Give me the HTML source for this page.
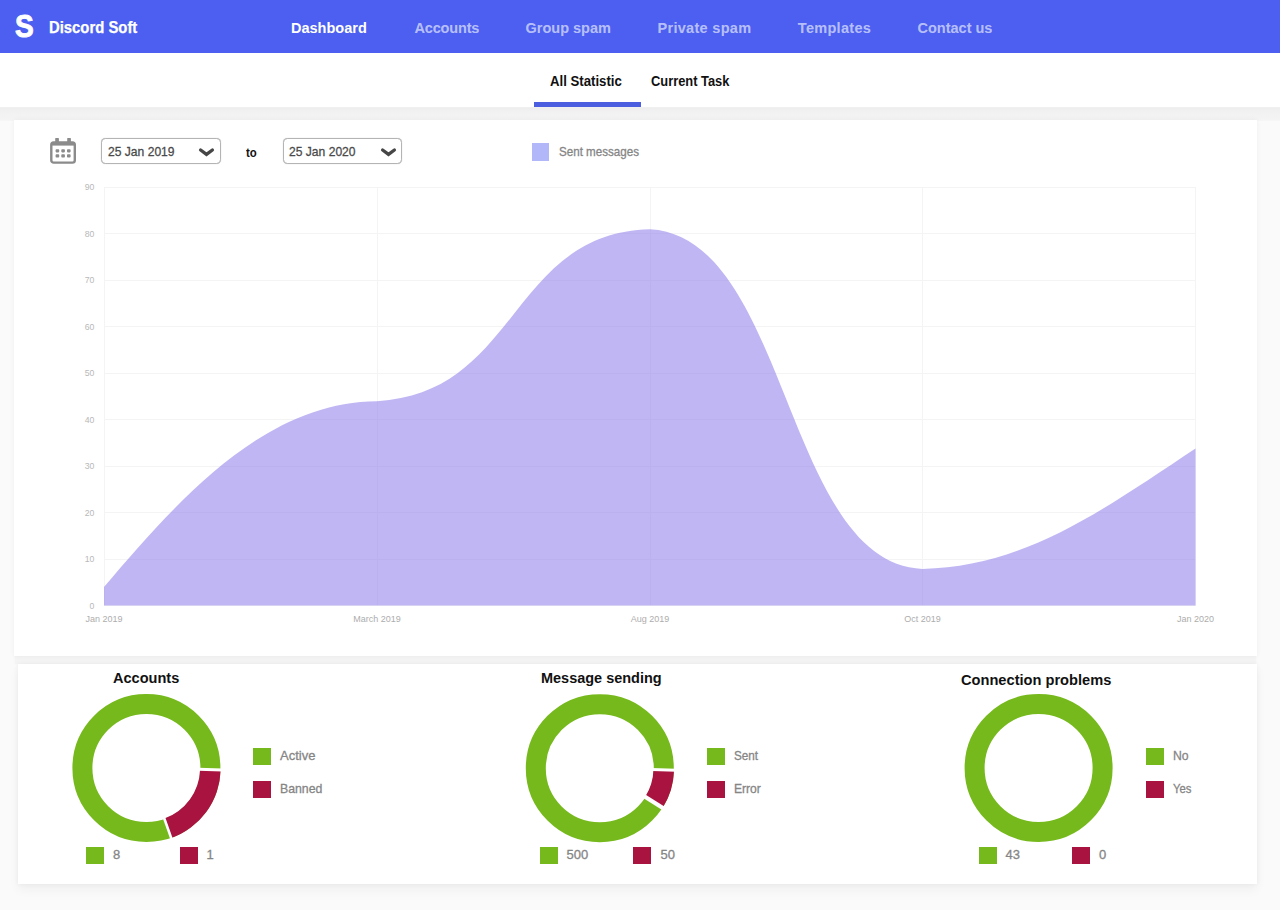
<!DOCTYPE html>
<html>
<head>
<meta charset="utf-8">
<title>Discord Soft</title>
<style>
*{box-sizing:border-box;margin:0;padding:0}
html,body{width:1280px;height:910px;overflow:hidden}
body{background:#fafafa;font-family:"Liberation Sans",sans-serif;position:relative}
.abs{position:absolute;white-space:nowrap;line-height:1;transform-origin:0 50%}
#hdr{position:absolute;left:0;top:0;width:1280px;height:53px;background:#4c5ff1}
#sub{position:absolute;left:0;top:53px;width:1280px;height:54px;background:#fff}
#band1{position:absolute;left:0;top:106px;width:1280px;height:15px;background:linear-gradient(#fff 0,#ededed 12%,#f1f1f1 35%,#f4f4f4 90%,#f6f6f6 100%)}
#band2{position:absolute;left:15px;top:656px;width:1241px;height:8px;background:#f4f4f4;box-shadow:0 0 3px #f4f4f4}
.nav{color:rgba(255,255,255,.62);font-weight:bold;font-size:14.5px;top:21px}
.nav.on{color:#fff}
.tab{color:#111;font-weight:bold;font-size:14px;top:74px}
#c1{position:absolute;left:14px;top:120px;width:1243px;height:536px;background:#fff;box-shadow:0 0 5px rgba(0,0,0,.05)}
#c2{position:absolute;left:18px;top:664px;width:1239px;height:220px;background:#fff;box-shadow:0 0 5px rgba(0,0,0,.05),0 6px 10px rgba(0,0,0,.045)}
.sel{position:absolute;top:138px;height:26px;width:120px;border:1px solid #b4b4b4;border-radius:4.5px;background:#fff;box-shadow:0 0 .8px rgba(0,0,0,.35)}
.selt{-webkit-text-stroke:.3px #4a4a4a;color:#4a4a4a;font-size:13px;top:145px}
.yl{color:#b8b8b8;font-size:8.7px;width:20px;text-align:right;left:74.3px}
.xl{color:#adadad;font-size:9px;width:80px;text-align:center;top:614.5px}
.ttl{color:#111;font-weight:bold;font-size:15px}
.lg{color:#858585;font-size:13px;-webkit-text-stroke:.3px #858585}
.sq{position:absolute;width:18px;height:17.5px}
.g{background:#76b91c}
.r{background:#a8143f}
</style>
</head>
<body>
<div id="hdr"></div>
<div id="band1"></div>
<div id="band2"></div>
<div id="sub"></div>
<div id="c1"></div>
<div id="c2"></div>

<!-- header -->
<div class="abs" id="logoS" style="left:14.8px;top:11.2px;color:#fff;font-weight:bold;font-size:30.5px;-webkit-text-stroke:.9px #fff;transform:scaleX(.92)">S</div>
<div class="abs" id="brand" style="left:49.4px;top:19.7px;color:#fff;font-weight:bold;font-size:15.8px;-webkit-text-stroke:.25px #fff;transform:scaleX(.94)">Discord Soft</div>
<div class="abs nav on" id="n1" style="left:291px">Dashboard</div>
<div class="abs nav" id="n2" style="left:414.4px;letter-spacing:-.15px">Accounts</div>
<div class="abs nav" id="n3" style="left:525.5px">Group spam</div>
<div class="abs nav" id="n4" style="left:657.5px;letter-spacing:.3px">Private spam</div>
<div class="abs nav" id="n5" style="left:797.8px;letter-spacing:.3px">Templates</div>
<div class="abs nav" id="n6" style="left:917.5px">Contact us</div>

<!-- sub tabs -->
<div class="abs tab" id="t1" style="left:550px;transform:scaleX(.942)">All Statistic</div>
<div class="abs tab" id="t2" style="left:651px;transform:scaleX(.919)">Current Task</div>
<div style="position:absolute;left:534px;top:102px;width:107px;height:4.5px;background:#4b5ee0"></div>

<!-- controls -->
<svg class="abs" style="left:48px;top:136px" width="32" height="30" viewBox="0 0 32 30">
  <rect x="3.3" y="6.4" width="23.5" height="20.2" rx="2.4" fill="none" stroke="#8b8b8b" stroke-width="2.4"/>
  <rect x="3.3" y="6.4" width="23.5" height="3.2" fill="#8b8b8b"/>
  <rect x="7.2" y="2" width="3.7" height="5" rx=".6" fill="#8b8b8b"/>
  <rect x="19.2" y="2" width="3.7" height="5" rx=".6" fill="#8b8b8b"/>
  <g fill="#8b8b8b">
    <rect x="7.6" y="13.2" width="3.6" height="3.2" rx=".8"/><rect x="13.3" y="13.2" width="3.6" height="3.2" rx=".8"/><rect x="19" y="13.2" width="3.6" height="3.2" rx=".8"/>
    <rect x="7.6" y="18.3" width="3.6" height="3.2" rx=".8"/><rect x="13.3" y="18.3" width="3.6" height="3.2" rx=".8"/><rect x="19" y="18.3" width="3.6" height="3.2" rx=".8"/>
  </g>
</svg>
<div class="sel" style="left:101px"></div>
<div class="abs selt" id="s1" style="left:107.5px;transform:scaleX(.93)">25 Jan 2019</div>
<svg class="abs" style="left:196px;top:145px" width="22" height="14" viewBox="0 0 22 14"><path d="M4.6 5 L10.5 9.4 L16.4 5" fill="none" stroke="#464646" stroke-width="3.3" stroke-linecap="round" stroke-linejoin="miter"/></svg>
<div class="abs" id="to" style="left:245.5px;top:147px;color:#111;font-weight:bold;font-size:12px;transform:scaleX(.95)">to</div>
<div class="sel" style="left:282.5px;width:119px"></div>
<div class="abs selt" id="s2" style="left:289px;transform:scaleX(.93)">25 Jan 2020</div>
<svg class="abs" style="left:377.5px;top:145px" width="22" height="14" viewBox="0 0 22 14"><path d="M4.6 5 L10.5 9.4 L16.4 5" fill="none" stroke="#464646" stroke-width="3.3" stroke-linecap="round" stroke-linejoin="miter"/></svg>

<div style="position:absolute;left:531.5px;top:143px;width:17.5px;height:17.5px;background:#b1b7f8"></div>
<div class="abs lg" id="lgm" style="left:559px;top:145px;transform:scaleX(.893)">Sent messages</div>

<!-- chart -->
<svg class="abs" style="left:0;top:170px" width="1280" height="460" viewBox="0 170 1280 460">
  <g stroke="#f4f4f4" stroke-width="1" fill="none" shape-rendering="crispEdges">
    <path d="M104 187.5H1196M104 233.5H1196M104 280.5H1196M104 326.5H1196M104 373.5H1196M104 419.5H1196M104 466.5H1196M104 512.5H1196M104 559.5H1196M104 605.5H1196"/>
    <path d="M104.5 187V606M377.5 187V606M650.5 187V606M922.5 187V606M1195.5 187V606"/>
  </g>
  <path d="M104,587 C173.4,505.9 262.3,401.5 377,401.2 C519.2,393.4 509.4,233 650,229.2 C788.8,236.9 784.5,563.5 922.5,568.9 C1024.8,567.2 1104,509.3 1195.5,448.5 L1195.5,605.5 L104,605.5 Z" fill="rgba(127,110,232,.5)"/>
</svg>
<div class="abs yl" style="top:183px">90</div>
<div class="abs yl" style="top:229.5px">80</div>
<div class="abs yl" style="top:276px">70</div>
<div class="abs yl" style="top:322.5px">60</div>
<div class="abs yl" style="top:369px">50</div>
<div class="abs yl" style="top:415.5px">40</div>
<div class="abs yl" style="top:462px">30</div>
<div class="abs yl" style="top:508.5px">20</div>
<div class="abs yl" style="top:555px">10</div>
<div class="abs yl" style="top:601.5px">0</div>
<div class="abs xl" style="left:64px">Jan 2019</div>
<div class="abs xl" style="left:337px">March 2019</div>
<div class="abs xl" style="left:610px">Aug 2019</div>
<div class="abs xl" style="left:882.5px">Oct 2019</div>
<div class="abs xl" style="left:1155.5px">Jan 2020</div>

<!-- donuts -->
<svg class="abs" style="left:60px;top:685px" width="1080" height="165" viewBox="60 685 1080 165" id="donuts">
<circle cx="146.4" cy="768" r="64.0" fill="none" stroke="#76b91c" stroke-width="20"/>
<path d="M220.67 769.94A74.3 74.3 0 0 1 171.20 838.04L164.33 818.62A53.7 53.7 0 0 0 200.08 769.41Z" fill="#a8143f"/>
<path d="M198.38 769.36L222.37 769.99" stroke="#fff" stroke-width="3" fill="none"/>
<path d="M163.76 817.02L171.77 839.64" stroke="#fff" stroke-width="2.6" fill="none"/>
<circle cx="599.8" cy="768.2" r="64.0" fill="none" stroke="#76b91c" stroke-width="20"/>
<path d="M674.07 770.14A74.3 74.3 0 0 1 662.67 807.79L645.24 796.82A53.7 53.7 0 0 0 653.48 769.61Z" fill="#a8143f"/>
<path d="M651.78 769.56L675.77 770.19" stroke="#fff" stroke-width="3" fill="none"/>
<path d="M643.80 795.91L664.11 808.70" stroke="#fff" stroke-width="4.2" fill="none"/>
<circle cx="1038.6" cy="768" r="64.0" fill="none" stroke="#76b91c" stroke-width="20"/>
</svg>

<div class="abs ttl" id="tt1" style="left:113px;top:669.7px;transform:scaleX(.97)">Accounts</div>
<div class="abs ttl" id="tt2" style="left:541px;top:669.7px;transform:scaleX(.965)">Message sending</div>
<div class="abs ttl" id="tt3" style="left:960.5px;top:671.7px;transform:scaleX(.975)">Connection problems</div>

<div class="sq g" style="left:253px;top:747.5px"></div><div class="abs lg" style="left:280px;top:749.2px">Active</div>
<div class="sq r" style="left:253px;top:780.5px"></div><div class="abs lg" style="left:280px;top:782.2px;transform:scaleX(.945)" id="lb">Banned</div>
<div class="sq g" style="left:86px;top:846.5px"></div><div class="abs lg" style="left:113px;top:848px">8</div>
<div class="sq r" style="left:179.5px;top:846.5px"></div><div class="abs lg" style="left:206.5px;top:848px">1</div>

<div class="sq g" style="left:706.5px;top:747.5px"></div><div class="abs lg" style="left:733.5px;top:749.2px;transform:scaleX(.9)">Sent</div>
<div class="sq r" style="left:706.5px;top:780.5px"></div><div class="abs lg" style="left:733.5px;top:782.2px;transform:scaleX(.93)">Error</div>
<div class="sq g" style="left:539.5px;top:846.5px"></div><div class="abs lg" style="left:566.5px;top:848px">500</div>
<div class="sq r" style="left:633px;top:846.5px"></div><div class="abs lg" style="left:660.5px;top:848px">50</div>

<div class="sq g" style="left:1146px;top:747.5px"></div><div class="abs lg" style="left:1173px;top:749.2px;transform:scaleX(.94)">No</div>
<div class="sq r" style="left:1146px;top:780.5px"></div><div class="abs lg" style="left:1173px;top:782.2px;transform:scaleX(.87)">Yes</div>
<div class="sq g" style="left:978.5px;top:846.5px"></div><div class="abs lg" style="left:1005.5px;top:848px">43</div>
<div class="sq r" style="left:1071.5px;top:846.5px"></div><div class="abs lg" style="left:1099px;top:848px">0</div>
</body>
</html>
